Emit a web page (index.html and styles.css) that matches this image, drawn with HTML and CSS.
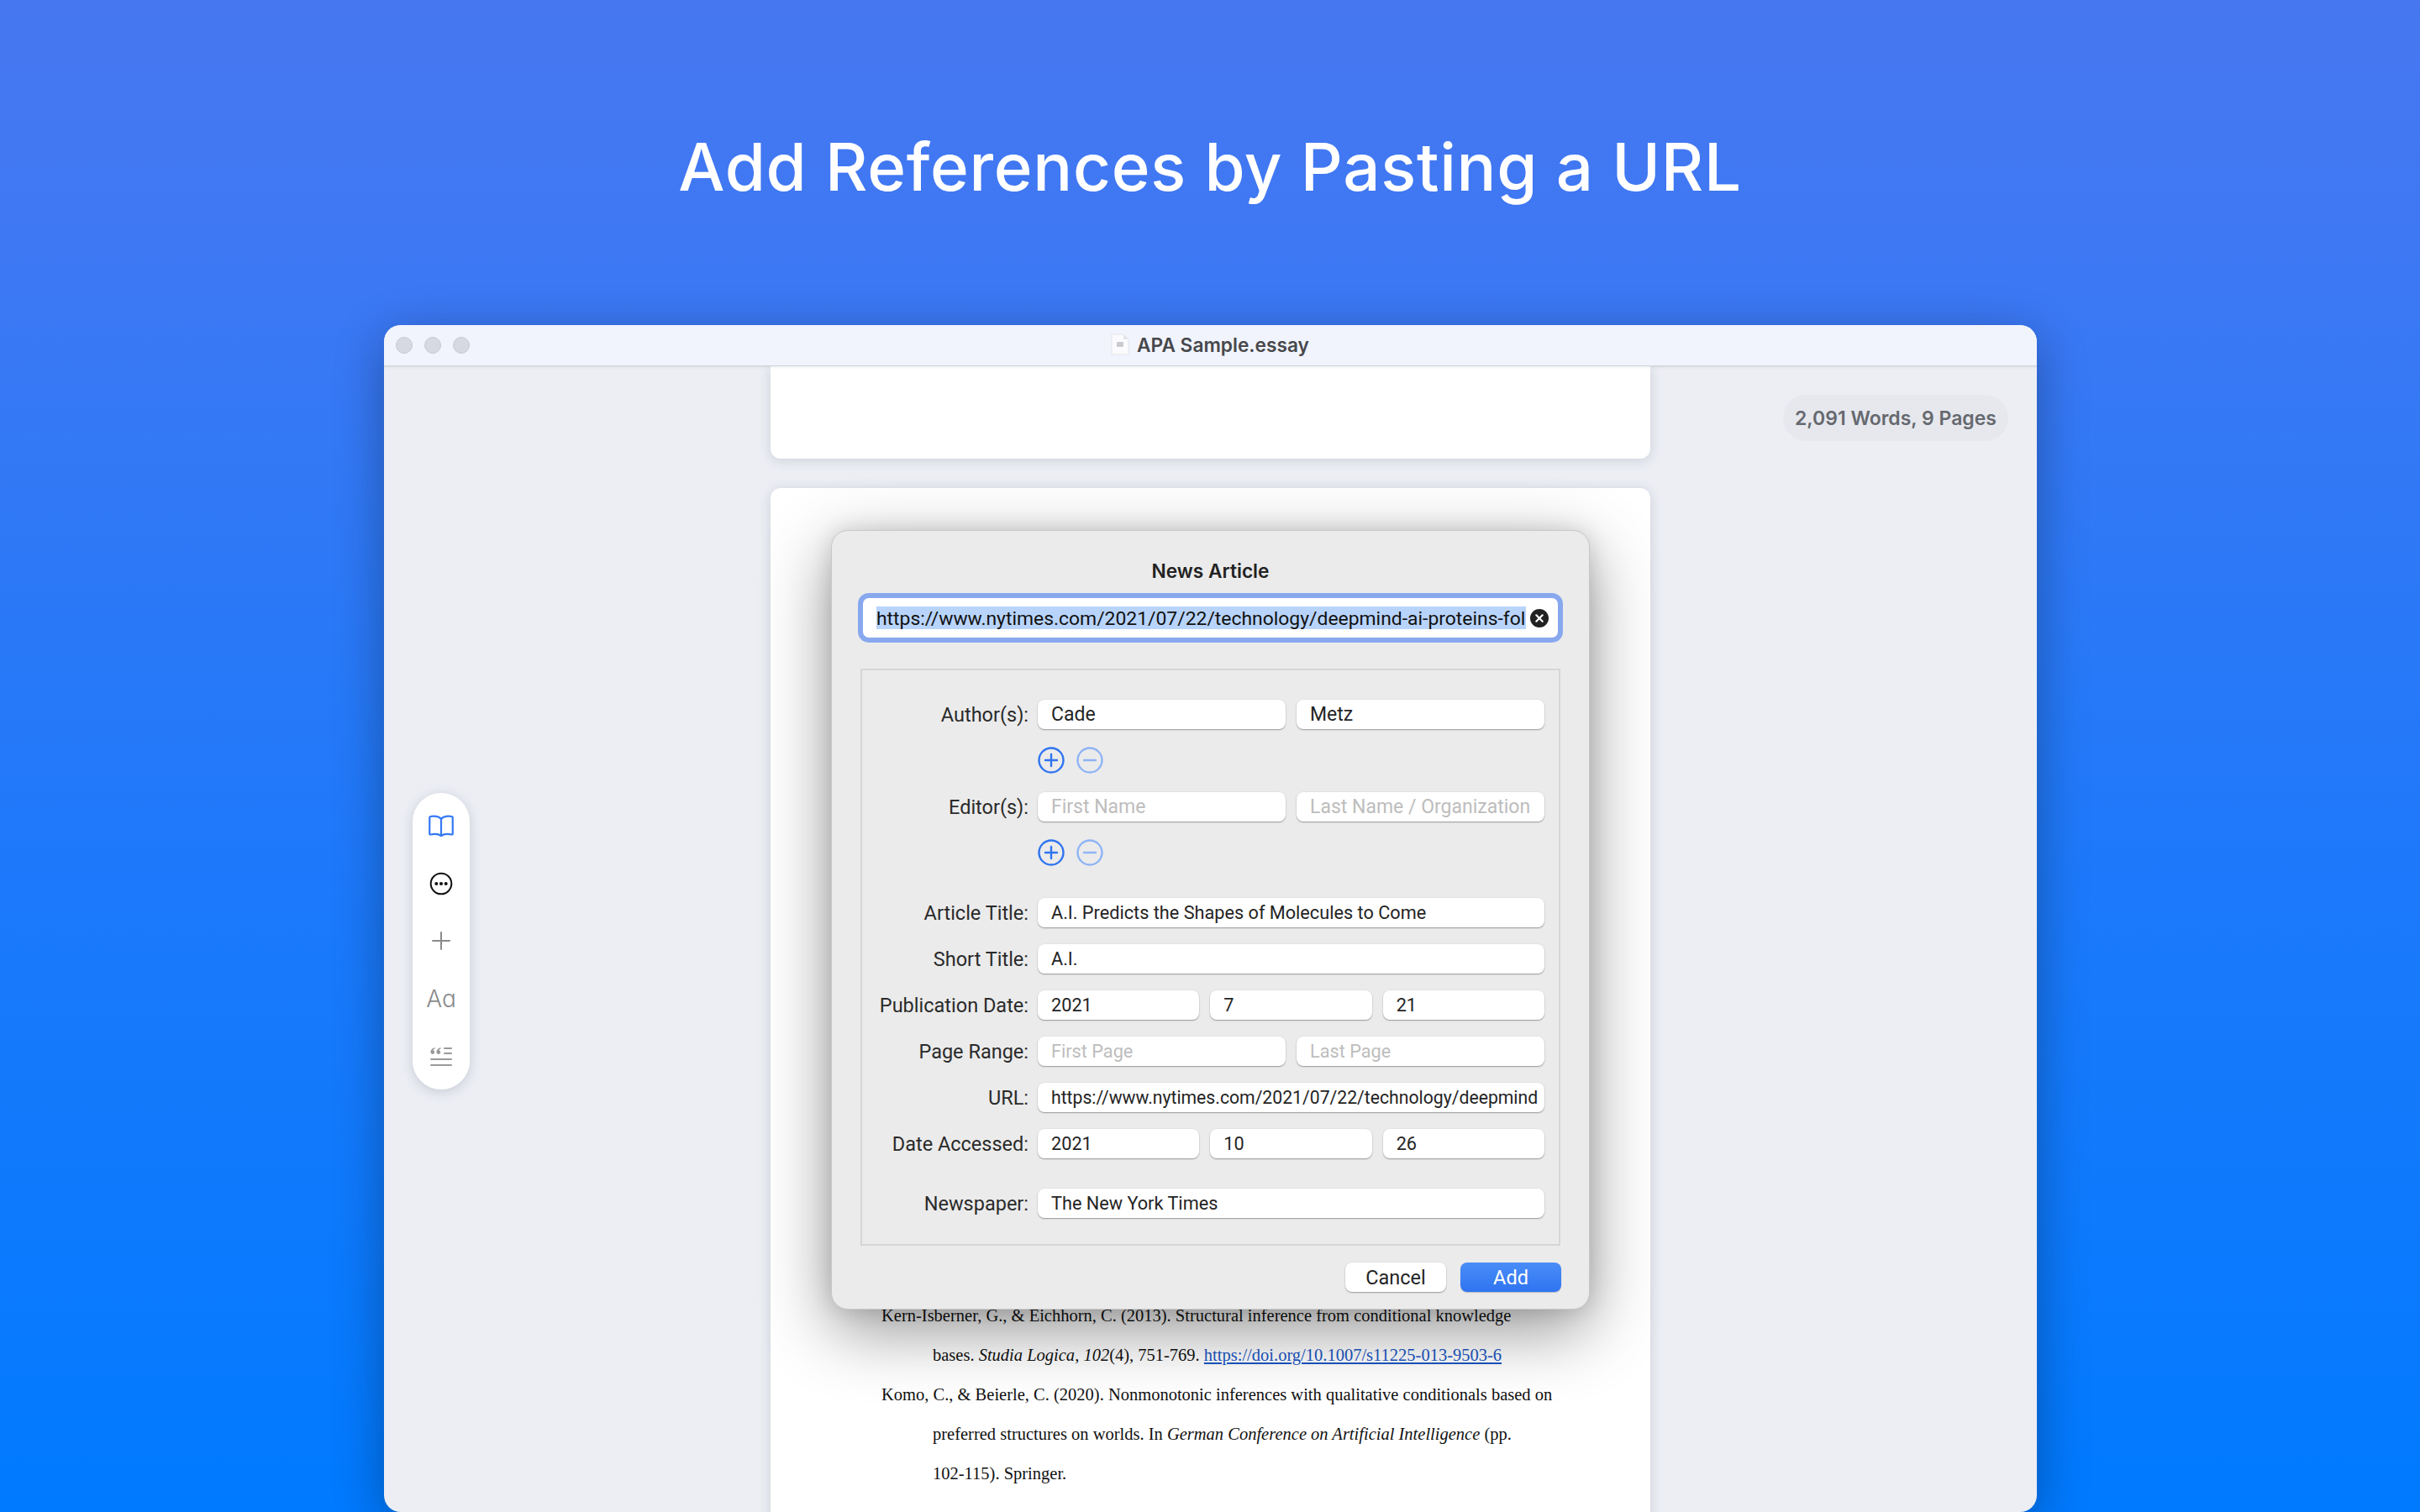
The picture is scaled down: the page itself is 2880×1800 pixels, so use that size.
FILE: index.html
```html
<!DOCTYPE html>
<html lang="en">
<head>
<meta charset="utf-8">
<title>Add References by Pasting a URL</title>
<link rel="stylesheet" href="styles.css">
</head>
<body>
<h1 class="headline">Add References by Pasting a URL</h1>
<main class="window">
  <header class="titlebar">
    <div class="lights"><span class="light"></span><span class="light"></span><span class="light"></span></div>
    <div class="doc-title">
      <svg class="doc-icon" width="24" height="26" viewBox="0 0 24 26"><path d="M2 1h14l6 6v18H2z" fill="#fbfbfd" stroke="#e2e4ea"/><path d="M16 1v6h6z" fill="#e4e6ec"/><rect x="8" y="10" width="8" height="6" rx="1" fill="#c9cbd1"/></svg>
      <span>APA Sample.essay</span>
    </div>
  </header>
  <div class="workspace">
    <aside class="gutter-left">
      <nav class="toolbar">
        <svg class="tool" width="30" height="26" viewBox="0 0 30 26" fill="none" stroke="#3478f6" stroke-width="2.200" stroke-linejoin="round" stroke-linecap="round"><path d="M15 5C12.500 2 7 1.300 2.200 2 1.600 2.100 1.300 2.500 1.300 3L1.200 22.500c0 .8.500 1.100 1.200 1C6.500 22.700 12 22.800 15 25 18 22.800 23.500 22.700 27.600 23.500c.7.100 1.200-.200 1.200-1L28.700 3c0-.500-.300-.900-.900-1C23 1.300 17.500 2 15 5z"/><path d="M15 5v20"/></svg>
        <svg class="tool" width="28" height="28" viewBox="0 0 28 28"><circle cx="14" cy="14" r="12.300" fill="none" stroke="#111" stroke-width="2"/><circle cx="8.300" cy="14" r="2" fill="#111"/><circle cx="14" cy="14" r="2" fill="#111"/><circle cx="19.700" cy="14" r="2" fill="#111"/></svg>
        <svg class="tool tool-plus" width="22" height="22" viewBox="0 0 22 22" stroke="#8a8a8c" stroke-width="2" stroke-linecap="round"><path d="M11 1v20M1 11h20"/></svg>
        <span class="tool tool-text">Aɑ</span>
        <svg class="tool tool-quote" width="26" height="24" viewBox="0 0 26 24" fill="#9a9a9c"><path d="M5.500 1C2.800 1.900.4 3.800.4 6.300c0 1.500 1 2.600 2.400 2.600s2.400-1 2.400-2.400c0-1.200-.8-2.100-1.900-2.300.3-.7 1.200-1.300 2.200-1.700zM12.500 1C9.800 1.900 7.400 3.800 7.400 6.300c0 1.500 1 2.600 2.400 2.600s2.400-1 2.400-2.400c0-1.200-.8-2.100-1.900-2.300.3-.7 1.200-1.300 2.200-1.700z"/><rect x="16" y="1" width="10" height="2" rx="1"/><rect x="16" y="7" width="10" height="2" rx="1"/><rect x="0" y="14" width="26" height="2" rx="1"/><rect x="0" y="21" width="26" height="2" rx="1"/></svg>
      </nav>
    </aside>
    <section class="pages">
      <div class="page page-top"></div>
      <article class="page page-main">
        <p class="ref">Kern-Isberner, G., &amp; Eichhorn, C. (2013). Structural inference from conditional knowledge</p>
        <p class="ref indent">bases. <i>Studia Logica</i>, <i>102</i>(4), 751-769. <a class="link" href="#">https://doi.org/10.1007/s11225-013-9503-6</a></p>
        <p class="ref">Komo, C., &amp; Beierle, C. (2020). Nonmonotonic inferences with qualitative conditionals based on</p>
        <p class="ref indent">preferred structures on worlds. In <i>German Conference on Artificial Intelligence</i> (pp.</p>
        <p class="ref indent">102-115). Springer.</p>
      </article>
    </section>
    <aside class="gutter-right"><div class="word-count">2,091 Words, 9 Pages</div></aside>
  </div>

  <div class="dialog">
    <h2 class="dialog-title">News Article</h2>
    <div class="url-bar">
      <span class="url-selected">https://www.nytimes.com/2021/07/22/technology/deepmind-ai-proteins-fol</span>
      <svg class="clear" width="22" height="22" viewBox="0 0 22 22"><circle cx="11" cy="11" r="11" fill="#222"/><path d="M7.300 7.300l7.400 7.400M14.700 7.300l-7.400 7.400" stroke="#fff" stroke-width="2.200" stroke-linecap="round"/></svg>
    </div>
    <div class="group">
      <div class="row"><label class="label">Author(s):</label><div class="fields two"><div class="field field-lg">Cade</div><div class="field field-lg">Metz</div></div></div>
      <div class="row-icons">
        <svg width="32" height="32" viewBox="0 0 32 32" fill="none" stroke="#2f74f0" stroke-width="2.400" stroke-linecap="round"><circle cx="16" cy="16" r="14.500"/><path d="M16 9v14M9 16h14"/></svg>
        <svg width="32" height="32" viewBox="0 0 32 32" fill="none" stroke="#8fb4f5" stroke-width="2.400" stroke-linecap="round"><circle cx="16" cy="16" r="14.500"/><path d="M9 16h14"/></svg>
      </div>
      <div class="row"><label class="label">Editor(s):</label><div class="fields two"><div class="field field-lg placeholder">First Name</div><div class="field field-lg placeholder">Last Name / Organization</div></div></div>
      <div class="row-icons">
        <svg width="32" height="32" viewBox="0 0 32 32" fill="none" stroke="#2f74f0" stroke-width="2.400" stroke-linecap="round"><circle cx="16" cy="16" r="14.500"/><path d="M16 9v14M9 16h14"/></svg>
        <svg width="32" height="32" viewBox="0 0 32 32" fill="none" stroke="#8fb4f5" stroke-width="2.400" stroke-linecap="round"><circle cx="16" cy="16" r="14.500"/><path d="M9 16h14"/></svg>
      </div>
      <div class="row row-title"><label class="label">Article Title:</label><div class="fields"><div class="field">A.I. Predicts the Shapes of Molecules to Come</div></div></div>
      <div class="row row-std"><label class="label">Short Title:</label><div class="fields"><div class="field">A.I.</div></div></div>
      <div class="row row-std"><label class="label">Publication Date:</label><div class="fields three"><div class="field">2021</div><div class="field">7</div><div class="field">21</div></div></div>
      <div class="row row-std"><label class="label">Page Range:</label><div class="fields two"><div class="field placeholder">First Page</div><div class="field placeholder">Last Page</div></div></div>
      <div class="row row-std"><label class="label">URL:</label><div class="fields"><div class="field field-url">https://www.nytimes.com/2021/07/22/technology/deepmind</div></div></div>
      <div class="row row-std"><label class="label">Date Accessed:</label><div class="fields three"><div class="field">2021</div><div class="field">10</div><div class="field">26</div></div></div>
      <div class="row row-news"><label class="label">Newspaper:</label><div class="fields"><div class="field">The New York Times</div></div></div>
    </div>
    <div class="actions">
      <button class="btn btn-cancel">Cancel</button>
      <button class="btn btn-add">Add</button>
    </div>
  </div>
</main>
</body>
</html>
```
FILE: styles.css
```css
* { box-sizing: border-box; }
html, body { margin: 0; padding: 0; }
body {
  width: 2880px;
  height: 1800px;
  overflow: hidden;
  background: linear-gradient(180deg, #4677f0 0%, #3f78f3 15%, #1f79fa 55%, #007aff 100%);
  font-family: Inter, "Liberation Sans", sans-serif;
  display: flex;
  flex-direction: column;
}
.headline {
  margin: 0;
  height: 387px;
  padding-top: 147px;
  text-align: center;
  color: #fff;
  font-size: 78px;
  font-weight: 500;
  line-height: 104px;
  letter-spacing: 0.7px;
  font-family: Inter, sans-serif;
}
.window {
  position: relative;
  width: 1967px;
  height: 1413px;
  margin-left: 457px;
  border-radius: 20px;
  background: #eceef4;
  box-shadow: 0 14px 60px rgba(0, 0, 0, 0.32);
  overflow: hidden;
  display: flex;
  flex-direction: column;
}
.titlebar {
  position: relative;
  height: 49px;
  flex: none;
  background: #f1f4fc;
  border-bottom: 1px solid #cfd2da;
  display: flex;
  align-items: center;
  justify-content: center;
  box-shadow: 0 1px 3px rgba(0, 0, 0, 0.08);
  z-index: 2;
}
.lights {
  position: absolute;
  left: 14px;
  top: 14px;
  display: flex;
  gap: 14px;
}
.light {
  width: 20px;
  height: 20px;
  border-radius: 50%;
  background: #d6d9e2;
  border: 1px solid #c6c9d1;
}
.doc-title {
  display: flex;
  align-items: center;
  gap: 8px;
  font-size: 22.700px;
  font-weight: 600;
  color: #47484c;
  margin-bottom: 2px;
  margin-right: 2px;
}
.workspace {
  flex: 1;
  display: grid;
  grid-template-columns: 460px 1047px 460px;
  min-height: 0;
}
.gutter-left { padding: 508px 0 0 34px; }
.toolbar {
  width: 68px;
  height: 353px;
  border-radius: 34px;
  background: #fff;
  box-shadow: 0 3px 14px rgba(40, 50, 80, 0.18);
  display: flex;
  flex-direction: column;
  align-items: center;
  padding: 26px 0 25px;
  justify-content: space-between;
}
.tool { display: block; flex: none; }
.tool-plus { position: relative; top: 1px; }
.tool-text {
  font-size: 28px;
  line-height: 34px;
  font-weight: 300;
  color: #8a8a8c;
}
.tool-quote { position: relative; top: -2px; }
.page {
  background: #fff;
  border-radius: 12px;
  box-shadow: 0 2px 14px rgba(40, 50, 80, 0.16);
}
.page-top {
  height: 110px;
  border-radius: 0 0 12px 12px;
}
.page-main {
  margin-top: 35px;
  height: 1300px;
  padding: 962px 0 0 132px;
  font-family: "Liberation Serif", serif;
  font-size: 20.500px;
  color: #111;
}
.ref {
  margin: 0;
  height: 47px;
  line-height: 47px;
  white-space: nowrap;
}
.indent { padding-left: 61px; }
.link { color: #1a56c4; text-decoration: underline; }
.gutter-right { padding: 34px 0 0 158px; }
.word-count {
  width: 268px;
  height: 55px;
  border-radius: 28px;
  background: #e6e8ee;
  color: #66696f;
  font-size: 23px;
  font-weight: 600;
  line-height: 56px;
  text-align: center;
  white-space: nowrap;
}
.dialog {
  position: absolute;
  left: 532px;
  top: 244px;
  width: 903px;
  height: 928px;
  padding: 0 34px;
  border-radius: 20px;
  background: #ebebeb;
  border: 1px solid #c8c8c8;
  box-shadow: 0 24px 80px rgba(0, 0, 0, 0.42), 0 0 24px rgba(0, 0, 0, 0.12);
  color: #222;
  z-index: 3;
}
.dialog-title {
  margin: 0;
  padding-top: 32px;
  height: 74px;
  line-height: 32px;
  font-size: 22.700px;
  font-weight: 600;
  text-align: center;
  color: #222;
}
.url-bar {
  position: relative;
  margin: 0 -3px;
  height: 59px;
  border: 6px solid #88a8ee;
  border-radius: 13px;
  background: #fff;
  padding: 10px 0 0 16px;
  white-space: nowrap;
  font-family: Roboto, sans-serif;
}
.url-selected {
  display: inline-block;
  width: 773px;
  height: 27px;
  line-height: 29px;
  font-size: 22.900px;
  background: #b8d4fb;
  color: #111;
  overflow: hidden;
}
.clear {
  position: absolute;
  right: 11px;
  top: 13px;
}
.group {
  margin-top: 31px;
  height: 687px;
  border: 2px solid #d6d6d6;
  padding: 35px 17px 0 0;
  font-family: Roboto, sans-serif;
}
.row {
  display: flex;
  height: 35px;
}
.label {
  width: 198px;
  flex: none;
  text-align: right;
  font-size: 23.500px;
  line-height: 37px;
  color: #2a2a2a;
  white-space: nowrap;
}
.fields {
  flex: 1;
  margin-left: 11px;
  display: grid;
  grid-template-columns: 1fr;
  column-gap: 13px;
  min-width: 0;
}
.two { grid-template-columns: 1fr 1fr; }
.three { grid-template-columns: 1fr 1fr 1fr; }
.field {
  height: 35px;
  background: #fff;
  border-radius: 8px;
  box-shadow: 0 1px 1.500px rgba(0, 0, 0, 0.34), 0 0 0 0.500px rgba(0, 0, 0, 0.05);
  padding-left: 16px;
  font-size: 21.700px;
  line-height: 35px;
  color: #242424;
  white-space: nowrap;
  overflow: hidden;
}
.field-lg { font-size: 23px; line-height: 36px; }
.field-url { font-size: 21.200px; }
.placeholder { color: #bdbdbd; }
.row-icons {
  display: flex;
  gap: 14px;
  height: 32px;
  margin: 21px 0 22px 209px;
}
.row-icons svg { display: block; }
.row-title { margin-top: 38px; }
.row-std { margin-top: 20px; }
.row-news { margin-top: 36px; }
.actions {
  display: flex;
  justify-content: flex-end;
  gap: 17px;
  margin-top: 20px;
  margin-right: -1px;
}
.btn {
  width: 120px;
  height: 35px;
  border: 0;
  border-radius: 8px;
  font-family: Roboto, sans-serif;
  font-size: 23.500px;
  line-height: 35px;
  padding: 1px 0 0;
}
.btn-cancel {
  background: #fff;
  color: #242424;
  box-shadow: 0 1px 1.500px rgba(0, 0, 0, 0.34), 0 0 0 0.500px rgba(0, 0, 0, 0.05);
}
.btn-add {
  background: linear-gradient(180deg, #4a8df8, #2f74f0);
  color: #fff;
  box-shadow: 0 1px 1px rgba(0, 0, 0, 0.2);
}
```
